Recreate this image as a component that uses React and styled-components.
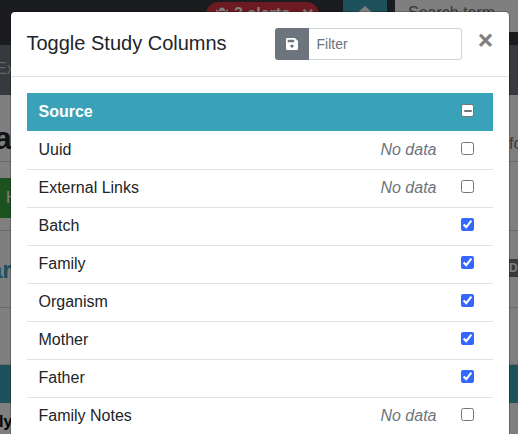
import React from 'react';
import styled, { createGlobalStyle } from 'styled-components';

const GlobalStyle = createGlobalStyle`
  *, *::before, *::after { box-sizing: border-box; }
  html, body { margin: 0; overflow: hidden; }
  body {
    font: 16px/24px "Liberation Sans", Arial, sans-serif;
    color: #212529;
    background: #fff;
  }
`;

const Page = styled.div`
  width: 518px;
  height: 434px;
  overflow: hidden;
  position: relative;
`;

const TopBar = styled.header`
  height: 45px;
  background: #37393f;
  display: flex;
  align-items: flex-start;
`;

const Alerts = styled.div`
  margin: 2px 0 0 206px;
  width: 113px;
  height: 25px;
  border-radius: 13px;
  background: #dc3545;
  color: #fff;
  font-weight: bold;
  font-size: 16px;
  line-height: 24px;
  white-space: nowrap;
  display: flex;
  align-items: flex-start;
  padding-left: 10px;
`;

const AlertText = styled.span`
  width: 74px;
  padding-left: 6px;
`;

const AlertClose = styled.span`
  font-size: 20px;
`;

const HomeButton = styled.div`
  margin-left: 24px;
  width: 44px;
  height: 32px;
  background: #3aa2b8;
  display: flex;
  justify-content: center;
  padding-top: 6px;
`;

const Search = styled.div`
  margin-left: 8px;
  flex: 1;
  height: 32px;
  background: #fff;
  color: #6c757d;
  padding: 1px 0 0 13px;
`;

const Nav = styled.nav`
  height: 50px;
  background: #6c757d;
  color: #c4c8cb;
  padding-top: 12px;
  text-indent: -4px;
`;

const Section = styled.section`
  height: ${(p) => p.$height}px;
  border-bottom: 1px solid #ced2d5;
  display: flex;
  justify-content: space-between;
  align-items: flex-start;
  overflow: hidden;
`;

const Heading = styled.h1`
  margin: 25px 0 0 -6px;
  font-size: 32px;
  line-height: 36px;
`;

const Note = styled.span`
  margin-top: 37px;
  width: 9px;
  color: #6c757d;
`;

const HelpButton = styled.div`
  margin-top: 16px;
  width: 80px;
  height: 40px;
  padding: 8px 6px;
  color: #fff;
  background: #38a341;
`;

const FamilyTitle = styled.h2`
  margin: 24px 0 0 -11px;
  font-size: 24px;
  line-height: 30px;
  color: #3aa2b8;
`;

const Badge = styled.span`
  margin-top: 28px;
  width: 11px;
  height: 18px;
  padding-left: 2px;
  background: #6c757d;
  color: #fff;
  font-size: 12px;
  font-weight: bold;
  line-height: 18px;
`;

const ColumnBand = styled.div`
  height: 38px;
  background: #3aa2b8;
`;

const Cell = styled.div`
  padding-top: 7px;
  text-indent: -1px;
  font-weight: bold;
  color: #000;
`;

const Backdrop = styled.div`
  position: absolute;
  inset: 0;
  padding: 11px 0 0 10px;
  background: rgba(0, 0, 0, 0.5);
`;

const Modal = styled.div`
  width: 500px;
  height: 520px;
  border: 1px solid rgba(0, 0, 0, 0.2);
  border-radius: 5px;
  background: #fff;
  background-clip: padding-box;
`;

const ModalHeader = styled.div`
  height: 65px;
  padding: 16px 16px 16px 15.5px;
  display: flex;
  align-items: flex-start;
  border-bottom: 1px solid #dee2e6;
`;

const Title = styled.h5`
  margin: 0;
  width: 248.5px;
  font-size: 20px;
  font-weight: 400;
  line-height: 30px;
`;

const InputGroup = styled.div`
  width: 187px;
  height: 32px;
  display: flex;
`;

const SaveButton = styled.button`
  width: 34px;
  padding: 0 0 1px;
  border: 0;
  border-radius: 3px 0 0 3px;
  background: #6c757d;
  color: #fff;
  display: grid;
  place-items: center;
`;

const FilterInput = styled.input`
  flex: 1;
  min-width: 0;
  padding: 4px 8px 4px 7.5px;
  border: 1px solid #ced4da;
  border-left: 0;
  border-radius: 0 3px 3px 0;
  font: 14px/21px "Liberation Sans", Arial, sans-serif;
  outline: 0;
  &::placeholder { color: #6c757d; }
`;

const CloseButton = styled.button`
  margin-left: 16px;
  padding: 0;
  border: 0;
  background: none;
  color: #7f7f7f;
  font: bold 25.5px/24px "Liberation Sans", Arial, sans-serif;
  -webkit-text-stroke: 0.3px #7f7f7f;
`;

const List = styled.div`
  margin: 16px;
  width: 466px;
`;

const Row = styled.div`
  height: 38px;
  padding: 6px 0 0 11.5px;
  display: flex;
  border-top: 1px solid ${(p) => (p.$plain ? 'transparent' : '#dee2e6')};
`;

const HeadRow = styled(Row)`
  border-top-color: #3aa2b8;
  background: #3aa2b8;
  color: #fff;
  font-weight: bold;
`;

const Label = styled.span`
  flex: 1;
`;

const NoData = styled.em`
  color: #6c757d;
  margin-right: 24.5px;
`;

const Check = styled.input`
  width: 13px;
  height: 13px;
  margin: 4px 19px 0 0;
  accent-color: #3367ff;
`;

const MixedCheck = styled.span`
  width: 13px;
  height: 13px;
  margin: 4px 19px 0 0;
  border: 1px solid #767676;
  border-radius: 2.5px;
  background: #fff;
  display: flex;
  justify-content: center;
  padding-top: 4.5px;
  &::after {
    content: "";
    width: 8px;
    height: 2px;
    border-radius: 1px;
    background: #767676;
  }
`;

const SaveIcon = () => (
  <svg width="12" height="12" viewBox="0 0 12 12">
    <path fill="currentColor" fillRule="evenodd" d="M1.300 0H8.900L12 3.100V10.700Q12 12 10.700 12H1.300Q0 12 0 10.700V1.300Q0 0 1.300 0ZM1.700 1.800V4.200H8.200V1.800ZM6 6.400a1.700 1.700 0 1 0 0 3.400a1.700 1.700 0 1 0 0-3.400Z" />
  </svg>
);

const HomeIcon = () => (
  <svg width="18" height="16" viewBox="0 0 18 16">
    <path fill="#fff" d="M9 0 18 8H15V16H11V10H7V16H3V8H0Z" />
  </svg>
);

const AlertIcon = () => (
  <svg width="12" height="20" viewBox="0 0 12 20">
    <path fill="none" stroke="#fff" strokeWidth="1.5" d="M0 8 3 10M12 8 9 10M0 13H12M0 18 3 15M12 18 9 15" />
    <path fill="#fff" d="M3 9a3 3.500 0 0 1 6 0ZM2.500 10H9.500V15a3.500 4 0 0 1-7 0Z" />
  </svg>
);

const columns = [
  ['Uuid', false],
  ['External Links', false],
  ['Batch', true],
  ['Family', true],
  ['Organism', true],
  ['Mother', true],
  ['Father', true],
  ['Family Notes', false],
];

export default function App() {
  return (
    <Page>
      <GlobalStyle />
      <TopBar>
        <Alerts><AlertIcon /><AlertText>3 alerts</AlertText><AlertClose>×</AlertClose></Alerts>
        <HomeButton><HomeIcon /></HomeButton>
        <Search>Search term</Search>
      </TopBar>
      <Nav>Ex</Nav>
      <Section $height={67}><Heading>a</Heading><Note>fo</Note></Section>
      <Section $height={69}><HelpButton>H</HelpButton></Section>
      <Section $height={77}><FamilyTitle>ar</FamilyTitle><Badge>D</Badge></Section>
      <Section $height={57} />
      <ColumnBand />
      <Cell>ly</Cell>
      <Backdrop>
        <Modal role="dialog">
          <ModalHeader>
            <Title>Toggle Study Columns</Title>
            <InputGroup>
              <SaveButton aria-label="Save"><SaveIcon /></SaveButton>
              <FilterInput placeholder="Filter" />
            </InputGroup>
            <CloseButton>×</CloseButton>
          </ModalHeader>
          <List>
            <HeadRow><Label>Source</Label><MixedCheck /></HeadRow>
            {columns.map(([name, on], i) => (
              <Row key={name} $plain={i === 0}>
                <Label>{name}</Label>
                {!on && <NoData>No data</NoData>}
                <Check type="checkbox" defaultChecked={on} />
              </Row>
            ))}
          </List>
        </Modal>
      </Backdrop>
    </Page>
  );
}
